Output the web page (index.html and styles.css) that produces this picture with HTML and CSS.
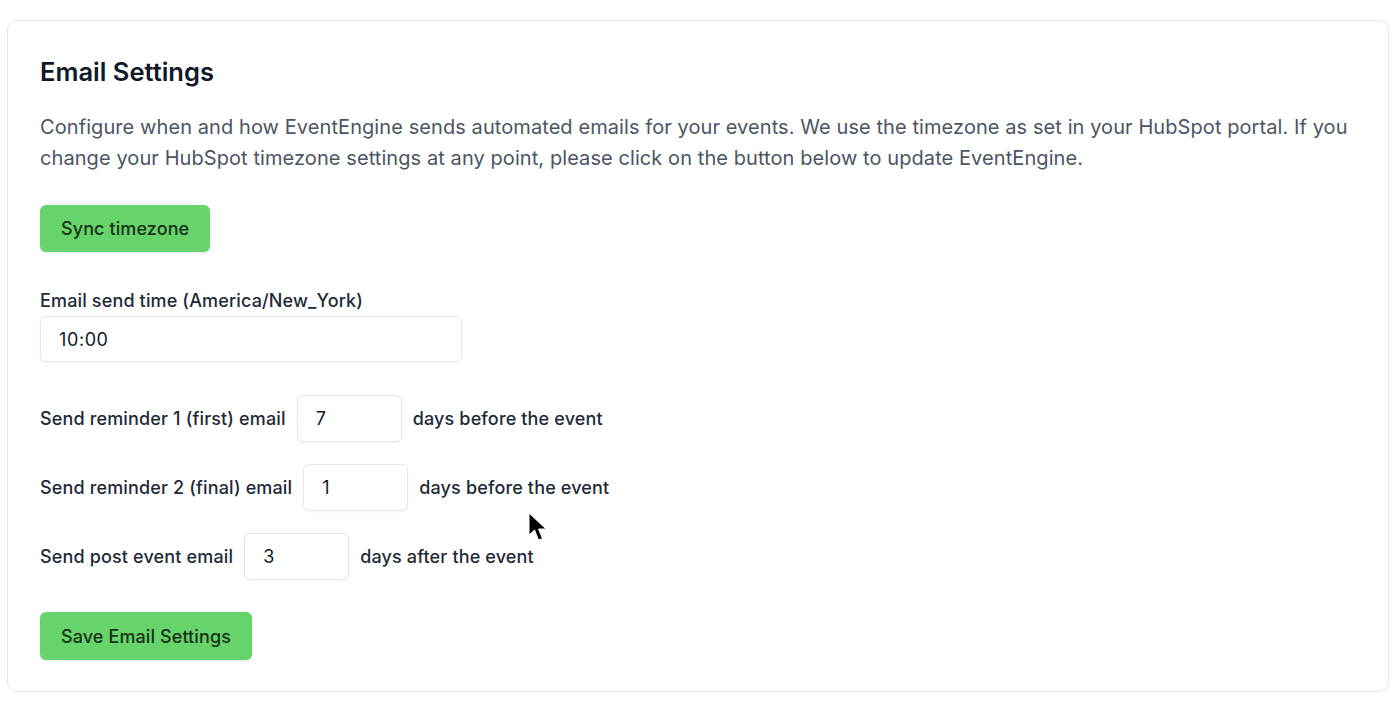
FILE: index.html
```html
<!DOCTYPE html>
<html lang="en">
<head>
    <meta charset="UTF-8">
    <meta name="viewport" content="width=device-width, initial-scale=1.0">
    <title>Email Settings</title>
    <link rel="stylesheet" href="styles.css">
</head>
<body>
    <div class="settings-card">
        <h2>Email Settings</h2>
        <p class="settings-desc">
            Configure when and how EventEngine sends automated emails for your events. We use the timezone as set in your HubSpot portal. If you change your HubSpot timezone settings at any point, please click on the button below to update EventEngine.
        </p>

        <button class="btn-green">Sync timezone</button>

        <div class="field">
            <label class="field-label">Email send time (America/New_York)</label>
            <input class="text-input time-input" type="text" value="10:00">
        </div>

        <div class="inline-row first">
            <span>Send reminder 1 (first) email</span>
            <input class="text-input num-input" type="text" value="7">
            <span>days before the event</span>
        </div>

        <div class="inline-row">
            <span>Send reminder 2 (final) email</span>
            <input class="text-input num-input" type="text" value="1">
            <span>days before the event</span>
        </div>

        <div class="inline-row">
            <span>Send post event email</span>
            <input class="text-input num-input" type="text" value="3">
            <span>days after the event</span>
        </div>

        <button class="btn-green save-btn">Save Email Settings</button>
    </div>

    <!-- mouse pointer in the capture -->
    <svg class="cursor" width="22" height="30" viewBox="0 0 22 30">
        <path d="M1 1 L1 23 L6.5 18 L10.5 28 L14.5 26.5 L10.5 17 L18 17 Z" fill="#000" stroke="#fff" stroke-width="1"/>
    </svg>
</body>
</html>
```

FILE: styles.css
```css
* {
    margin: 0;
    padding: 0;
    box-sizing: border-box;
}

body {
    font-family: Inter, "Noto Sans", sans-serif;
    background: #fff;
    color: #1f2937;
    padding: 20px 11px 0 7px;
}

.settings-card {
    border: 1px solid #e5e7eb;
    border-radius: 10px;
    padding: 35px 32px 31px 32px;
    min-height: 672px;
}

.settings-card h2 {
    font-size: 25.5px;
    line-height: 32px;
    font-weight: 600;
    color: #111827;
}

.settings-desc {
    margin-top: 24px;
    font-size: 20px;
    line-height: 31px;
    letter-spacing: 0.08px;
    color: #4b5563;
}

.btn-green {
    display: block;
    margin-top: 31px;
    background: #66d46a;
    color: #163016;
    border: none;
    border-radius: 6px;
    height: 47px;
    padding: 0 21px;
    font-family: inherit;
    font-size: 18px;
    font-weight: 500;
    letter-spacing: 0.1px;
    box-shadow: 0 1px 3px rgba(0, 0, 0, 0.12);
    cursor: pointer;
}

.field {
    margin-top: 37px;
}

.field-label {
    display: block;
    font-size: 18px;
    line-height: 24px;
    font-weight: 500;
    letter-spacing: 0.15px;
    color: #1f2937;
    margin-bottom: 3px;
}

.text-input {
    height: 46px;
    border: 1px solid #e5e7eb;
    border-radius: 6px;
    padding: 0 18px;
    font-family: inherit;
    font-size: 18px;
    letter-spacing: 0.6px;
    color: #111827;
    background: #fff;
    box-shadow: 0 1px 2px rgba(0, 0, 0, 0.05);
    outline: none;
}

.time-input {
    width: 422px;
}

.inline-row {
    display: flex;
    align-items: center;
    margin-top: 22px;
    font-size: 18px;
    font-weight: 500;
    letter-spacing: 0.15px;
    color: #1f2937;
}

.inline-row.first {
    margin-top: 33px;
}

.num-input {
    width: 105px;
    height: 47px;
    margin: 0 11px 0 11px;
}

.save-btn {
    margin-top: 32px;
    height: 48px;
}

.cursor {
    position: absolute;
    left: 528px;
    top: 512px;
}
```
